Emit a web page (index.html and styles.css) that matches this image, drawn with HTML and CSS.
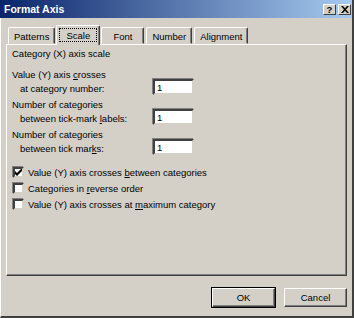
FILE: index.html
```html
<!DOCTYPE html>
<html lang="en">
<head>
  <meta charset="UTF-8">
  <title>Format Axis</title>
  <link rel="stylesheet" href="styles.css">
</head>
<body>
  <div class="ventana">
    <div class="titulo">
      <span>Format Axis</span>
      <div class="botones-titulo">
        <span class="btn-titulo">?</span>
        <span class="btn-titulo">
          <svg width="8" height="7" viewBox="0 0 8 7"><path d="M0 0 L2 0 L4 2.3 L6 0 L8 0 L5 3.5 L8 7 L6 7 L4 4.7 L2 7 L0 7 L3 3.5 Z" fill="#000"/></svg>
        </span>
      </div>
    </div>

    <div class="pestanas">
      <div class="pestana">Patterns</div>
      <div class="pestana activa"><span class="foco">Scale</span></div>
      <div class="pestana">Font</div>
      <div class="pestana">Number</div>
      <div class="pestana">Alignment</div>
    </div>

    <div class="panel">
      <p class="encabezado">Category (X) axis scale</p>

      <div class="campo">
        <div class="etiqueta">
          <div>Value (Y) axis <u>c</u>rosses</div>
          <div class="sangria">at category number:</div>
        </div>
        <div class="caja">1</div>
      </div>

      <div class="campo">
        <div class="etiqueta">
          <div>Number of categories</div>
          <div class="sangria">between tick-mark <u>l</u>abels:</div>
        </div>
        <div class="caja">1</div>
      </div>

      <div class="campo">
        <div class="etiqueta">
          <div>Number of categories</div>
          <div class="sangria">between tick mar<u>k</u>s:</div>
        </div>
        <div class="caja">1</div>
      </div>

      <div class="opciones">
        <div class="opcion">
          <span class="check">
            <svg width="7" height="7" viewBox="0 0 7 7"><path d="M0 2 L0 5 L2 7 L7 2 L7 -1 L2 4 Z" fill="#000"/></svg>
          </span>
          <span>Value (Y) axis crosses <u>b</u>etween categories</span>
        </div>
        <div class="opcion">
          <span class="check"></span>
          <span>Categories in <u>r</u>everse order</span>
        </div>
        <div class="opcion">
          <span class="check"></span>
          <span>Value (Y) axis crosses at <u>m</u>aximum category</span>
        </div>
      </div>
    </div>

    <div class="acciones">
      <button class="boton predeterminado">OK</button>
      <button class="boton">Cancel</button>
    </div>
  </div>
</body>
</html>
```

FILE: styles.css
```css
body { margin: 0; font-family: 'Liberation Sans', Arial, sans-serif; font-size: 9.5px; color: #000; }

.ventana {
  width: 354px;
  height: 318px;
  box-sizing: border-box;
  background: #d4d0c8;
  border-left: 1px solid #fff;
  border-right: 2px solid #404040;
  border-bottom: 2px solid #404040;
  display: flex;
  flex-direction: column;
}

.titulo {
  height: 18px;
  flex-shrink: 0;
  margin-left: -1px;
  background: linear-gradient(to right, #0a246a, #a6caf0);
  color: white;
  font-weight: bold;
  font-size: 10.5px;
  display: flex;
  align-items: center;
  justify-content: space-between;
  padding: 0 1px 0 4px;
}

.botones-titulo { display: flex; gap: 2px; }
.btn-titulo {
  width: 13px;
  height: 11px;
  box-sizing: border-box;
  background: #d4d0c8;
  color: #000;
  font-size: 9.5px;
  font-weight: bold;
  line-height: 9px;
  display: flex;
  align-items: center;
  justify-content: center;
  border: 1px solid;
  border-color: #fff #404040 #404040 #fff;
}

.pestanas {
  display: flex;
  align-items: flex-end;
  height: 26px;
  box-sizing: border-box;
  padding-left: 7px;
  position: relative;
  z-index: 1;
  flex-shrink: 0;
}

.pestana {
  height: 17px;
  min-width: 43px;
  box-sizing: border-box;
  padding: 3px 5px 0;
  text-align: center;
  border: 1px solid;
  border-color: #fff #404040 transparent #fff;
  box-shadow: inset -1px 0 0 #808080;
  border-radius: 2px 2px 0 0;
  margin-right: 2px;
}

.pestana.activa {
  height: 20px;
  width: 44px;
  margin: 0 0 -1px -1px;
  padding: 2px 2px 0;
  background: #d4d0c8;
  border-bottom: none;
}
.pestana.activa + .pestana { margin-left: 1px; }

.foco {
  display: block;
  height: 14px;
  line-height: 13px;
  box-sizing: border-box;
  border: 1px dotted #000;
}

.panel {
  margin: 0 5px 0 5px;
  height: 232px;
  flex-shrink: 0;
  box-sizing: border-box;
  border: 1px solid;
  border-color: #fff #404040 #404040 #fff;
  box-shadow: inset -1px -1px 0 #808080;
  padding: 2px 5px;
}

.encabezado { margin: 0 0 7px; line-height: 14px; }

.campo {
  display: flex;
  align-items: flex-end;
  margin-bottom: 2px;
}

.etiqueta { width: 141px; line-height: 14px; }
.sangria { padding-left: 8px; }

.caja {
  width: 41px;
  height: 16px;
  box-sizing: border-box;
  background: #fff;
  border: 2px solid;
  border-color: #404040 #d4d0c8 #d4d0c8 #404040;
  box-shadow: -1px -1px 0 #808080;
  padding: 1px 2px;
  line-height: 12px;
  margin-bottom: 1px;
}

.opciones { margin-top: 8px; display: flex; flex-direction: column; }

.opcion { display: flex; align-items: center; gap: 4px; height: 16px; }

.check {
  width: 11px;
  height: 11px;
  margin-left: 1px;
  box-sizing: border-box;
  background: #fff;
  border: 2px solid;
  border-color: #404040 #d4d0c8 #d4d0c8 #404040;
  box-shadow: -1px -1px 0 #808080;
  display: flex;
  align-items: center;
  justify-content: center;
}

.acciones {
  display: flex;
  justify-content: flex-end;
  gap: 9px;
  padding: 12px 5px 0 0;
}

.boton {
  width: 63px;
  height: 19px;
  background: #d4d0c8;
  font-family: 'Liberation Sans', Arial, sans-serif;
  font-size: 9.5px;
  color: #000;
  border: 1px solid;
  border-color: #fff #404040 #404040 #fff;
  box-shadow: inset -1px -1px 0 #808080;
  padding: 0;
}
.boton.predeterminado { outline: 1px solid #000; }
```
